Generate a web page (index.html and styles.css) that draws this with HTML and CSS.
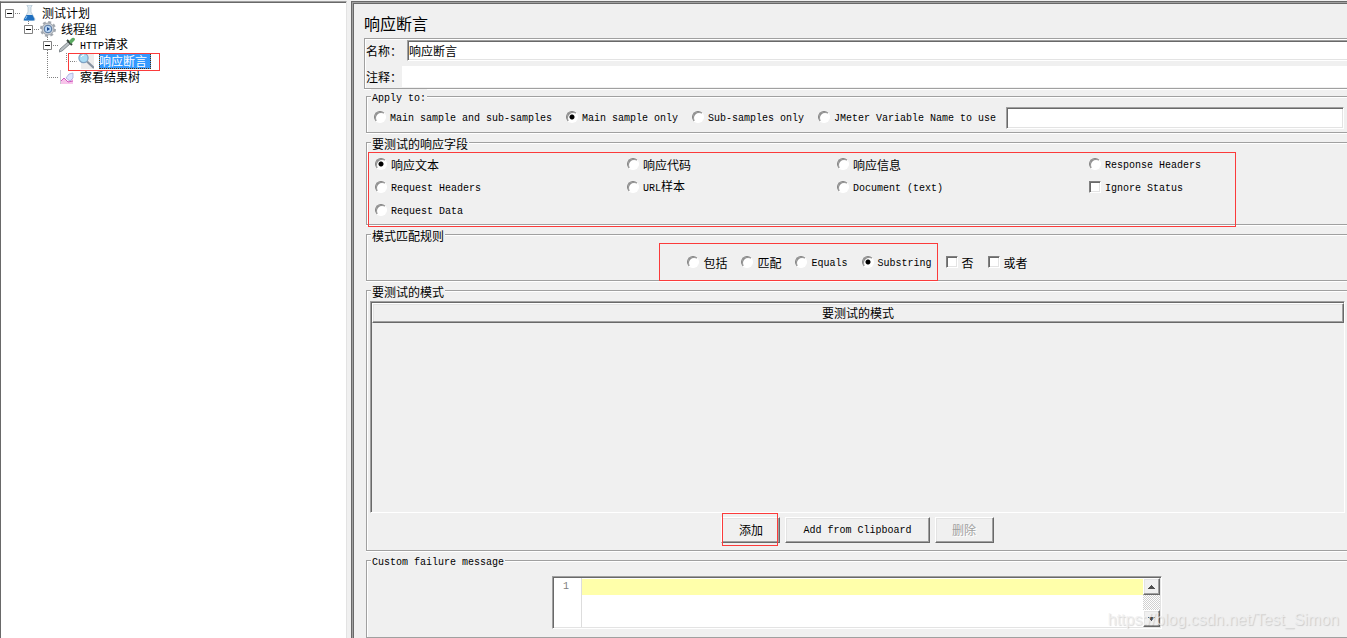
FILE: index.html
```html
<!DOCTYPE html>
<html lang="zh-CN">
<head>
<meta charset="utf-8">
<title>响应断言</title>
<link rel="stylesheet" href="styles.css">
</head>
<body>
<div class="window">
  <nav class="tree-pane">
    <ul class="tree">
      <li>
        <div class="node">
          <svg class="branch" viewBox="0 0 16 16"><path class="dots" d="M10 8.500h6"/><path class="box" d="M.5 4.500h8v8h-8z"/><path class="sign" d="M2 8.500h5"/></svg>
          <svg class="icon" viewBox="0 0 16 16"><path d="M6 0h5v1l-1 1v5l4 7q0 2-2 2H4q-2 0-1-2l4-7V2L6 1z" fill="#dbe8f1" stroke="#a5b9c8" stroke-width=".6"/><path d="M5.500 10h6l2 4q0 1.500-1.500 1.500H4q-1.500 0-1-1.500z" fill="#1e6fc0"/><path d="M6 11l-1.500 3" stroke="#8dc6f5"/></svg>
          <span>测试计划</span>
        </div>
        <ul>
          <li>
            <div class="node">
              <svg class="branch" viewBox="0 0 16 16"><path class="dots" d="M4.500 0v4M10 8.500h6"/><path class="box" d="M.5 4.500h8v8h-8z"/><path class="sign" d="M2 8.500h5"/></svg>
              <svg class="icon gear" viewBox="0 0 18 16"><circle cx="9" cy="8" r="7" fill="none" stroke="#a3a9b0" stroke-width="2" stroke-dasharray="3 2.500"/><circle cx="9" cy="8" r="6" fill="#c9ced4" stroke="#8f969e" stroke-width=".8"/><circle cx="9" cy="8" r="3.800" fill="#b9d6f4" stroke="#54759f"/><path d="M8 6l3 2-3 2z" fill="#1c4a94"/></svg>
              <span>线程组</span>
            </div>
            <ul>
              <li>
                <div class="node">
                  <svg class="branch" viewBox="0 0 16 16"><path class="dots" d="M4.500 0v4M4.500 13v3M10 8.500h6"/><path class="box" d="M.5 4.500h8v8h-8z"/><path class="sign" d="M2 8.500h5"/></svg>
                  <svg class="icon" viewBox="0 0 16 16"><path d="M0 15l1-3 8-7 2 2-8 7z" fill="#b9c0c4" stroke="#70777c" stroke-width=".8"/><path d="M8 3l5 5" stroke="#35433a" stroke-width="2"/><path d="M10 4l3-3q2-1 3 1 0 1-1 2l-3 3z" fill="#5cab62"/></svg>
                  <span><span class="latin">HTTP</span>请求</span>
                </div>
                <ul>
                  <li>
                    <div class="node">
                      <svg class="branch wide" viewBox="0 0 35 16"><path class="dots" d="M4.500 0v16M23.500 0v8.500h10"/></svg>
                      <svg class="icon" viewBox="0 0 16 16"><path d="M3 0h13v16H3z" fill="#ececec"/><path d="M9 8.500l7 6.500" stroke="#8792a0" stroke-width="2.200"/><circle cx="5.500" cy="5" r="4.600" fill="#a8dcf5" stroke="#7fa3c4" stroke-width="1.200"/><path d="M3 4q1-2 3-2" fill="none" stroke="#fff"/></svg>
                      <span class="selected">响应断言</span>
                      <i class="mark mark-node"></i>
                    </div>
                  </li>
                </ul>
              </li>
              <li>
                <div class="node">
                  <svg class="branch" viewBox="0 0 16 16"><path class="dots" d="M4.500 0v8.500H16"/></svg>
                  <svg class="icon" viewBox="0 0 16 16"><path d="M1.500 1v14" stroke="#c9c9d4"/><path d="M2 15v-3l3-3 3 3 6-2v5z" fill="#f7c4ea"/><path d="M2 12l3-3 4 4 5-1" fill="none" stroke="#cf59bd"/><path d="M7 9l3-4 4-1v5l-3 3z" fill="#dce4ff" stroke="#a7a9dc" stroke-width=".8"/></svg>
                  <span>察看结果树</span>
                </div>
              </li>
            </ul>
          </li>
        </ul>
      </li>
    </ul>
  </nav>

  <main class="panel">
    <h1>响应断言</h1>

    <div class="naming">
      <div class="name-row"><label for="name">名称：</label><input id="name" class="field sunken" type="text" value="响应断言"></div>
      <div class="name-row"><label for="comment">注释：</label><input id="comment" class="field" type="text"></div>
    </div>

    <fieldset class="apply">
      <legend class="latin">Apply to:</legend>
      <div class="apply-row">
        <label class="latin"><input type="radio" name="scope">Main sample and sub-samples</label>
        <label class="latin"><input type="radio" name="scope" checked>Main sample only</label>
        <label class="latin"><input type="radio" name="scope">Sub-samples only</label>
        <label class="latin"><input type="radio" name="scope">JMeter Variable Name to use</label>
        <input class="field sunken variable" type="text" aria-label="JMeter Variable Name to use">
      </div>
    </fieldset>

    <fieldset class="response">
      <legend>要测试的响应字段</legend>
      <div class="options">
        <label><input type="radio" name="target" checked>响应文本</label>
        <label><input type="radio" name="target">响应代码</label>
        <label><input type="radio" name="target">响应信息</label>
        <label class="latin"><input type="radio" name="target">Response Headers</label>
        <label class="latin"><input type="radio" name="target">Request Headers</label>
        <label><input type="radio" name="target"><span><span class="latin">URL</span>样本</span></label>
        <label class="latin"><input type="radio" name="target">Document (text)</label>
        <label class="latin"><input type="checkbox">Ignore Status</label>
        <label class="latin"><input type="radio" name="target">Request Data</label>
      </div>
      <i class="mark mark-response"></i>
    </fieldset>

    <fieldset class="rules">
      <legend>模式匹配规则</legend>
      <div class="rule-row">
        <label><input type="radio" name="rule">包括</label>
        <label><input type="radio" name="rule">匹配</label>
        <label class="latin"><input type="radio" name="rule">Equals</label>
        <label class="latin"><input type="radio" name="rule" checked>Substring</label>
        <label><input type="checkbox">否</label>
        <label><input type="checkbox">或者</label>
        <i class="mark mark-rules"></i>
      </div>
    </fieldset>

    <fieldset class="patterns">
      <legend>要测试的模式</legend>
      <div class="table-box">
        <table>
          <thead><tr><th>要测试的模式</th></tr></thead>
          <tbody></tbody>
        </table>
      </div>
      <div class="buttons">
        <span class="marked"><button type="button">添加</button><i class="mark mark-add"></i></span>
        <button type="button" class="latin clipboard">Add from Clipboard</button>
        <button type="button" disabled>删除</button>
      </div>
    </fieldset>

    <fieldset class="message">
      <legend class="latin">Custom failure message</legend>
      <div class="editor">
        <div class="gutter latin">1</div>
        <textarea aria-label="Custom failure message"></textarea>
        <div class="scrollbar">
          <button type="button" aria-label="向上滚动"><svg viewBox="0 0 7 4"><path d="M3 0h1v1h1v1h1v1h1v1H0V3h1V2h1V1h1z"/></svg></button>
          <button type="button" aria-label="向下滚动"><svg viewBox="0 0 7 4"><path d="M0 0h7v1H6v1H5v1H4v1H3V3H2V2H1V1H0z"/></svg></button>
        </div>
      </div>
    </fieldset>
    <div class="watermark">https://blog.csdn.net/Test_Simon</div>
  </main>
</div>
</body>
</html>
```
FILE: styles.css
```css
* { box-sizing: border-box; }

body {
  margin: 0;
  background: #f0f0f0;
  color: #000;
  font: 12px/16px "Noto Sans CJK SC", sans-serif;
  overflow: hidden;
}

input, button, textarea { font: inherit; color: inherit; margin: 0; }

.latin { font-family: "Liberation Mono", "Noto Sans CJK SC", monospace; font-size: 10px; }

.window { display: flex; gap: 4px; min-height: 100vh; padding-top: 1px; }

/* Test plan tree */
.tree-pane {
  flex: 0 0 347px;
  padding: 3px 0 0 4px;
  background: #fff;
  border-top: 1px solid #a0a0a0;
  border-left: 1px solid #696969;
  border-right: 1px solid #e3e3e3;
  box-shadow: inset 0 1px #696969;
}
.tree, .tree ul { list-style: none; margin: 0; padding: 0; }
.tree ul { padding-left: 19px; }
.node { display: flex; align-items: center; height: 16px; position: relative; white-space: nowrap; }
.branch { width: 16px; height: 16px; flex: none; }
.branch.wide { width: 35px; margin-left: -19px; }
.dots { fill: none; stroke: #808080; stroke-dasharray: 1 1; }
.box { fill: #fff; stroke: #808080; }
.sign { stroke: #000; }
.icon { width: 16px; height: 16px; flex: none; margin-right: 5px; }
.icon.gear { width: 18px; margin: 0 4px 0 -1px; }
.selected {
  height: 16px;
  padding-right: 4px;
  color: #fff;
  background: #3399ff;
  outline: 1px dotted #5c3000;
  outline-offset: -1px;
}

/* Highlight rectangles lying over the controls */
.mark { position: absolute; z-index: 1; border: 1px solid #fb3b3b; pointer-events: none; }
.mark-node { left: 63px; left: 6px; top: 0; width: 92px; height: 18px; }
.mark-response { left: 1px; top: 2px; width: 868px; height: 75px; }
.mark-rules { left: -28px; top: -12px; width: 279px; height: 38px; }
.mark-add { left: 1px; top: -5px; width: 56px; height: 33px; }

/* Settings panel */
.panel {
  flex: 1;
  min-width: 0;
  position: relative;
  padding: 12px 0 0 12px;
  border-top: 1px solid #696969;
  border-left: 1px solid #696969;
  box-shadow: inset 1px 1px #a0a0a0, inset 2px 2px #696969;
}
h1 { margin: 0 0 6px; font-size: 16px; line-height: 18px; font-weight: 400; }

.naming {
  display: grid;
  gap: 5px;
  padding: 1px 0 1px 1px;
  border: 1px solid #a0a0a0;
  border-right: 0;
  box-shadow: inset 1px 1px #fff, 0 1px #fff;
}
.name-row { display: flex; align-items: center; }
.name-row label { width: 36px; flex: none; }
.name-row .field { flex: 1; height: 21px; }
.name-row .sunken { margin-left: 5px; border-right: 0; box-shadow: inset 1px 1px #696969, inset 0 -1px #e3e3e3; }

.field { min-width: 0; padding: 0; border: 0; border-radius: 0; background: #fff; outline: 0; }
.sunken {
  padding: 0 1px;
  border: 1px solid;
  border-color: #a0a0a0 #fff #fff #a0a0a0;
  box-shadow: inset 1px 1px #696969, inset -1px -1px #e3e3e3;
}

fieldset {
  position: relative;
  min-width: 0;
  margin: 0 0 2px 2px;
  padding: 3px 3px 3px 4px;
  border: 1px solid #a0a0a0;
  border-right: 0;
  box-shadow: inset 1px 1px #fff, 0 1px #fff;
}
legend { padding: 2px 1px 0; line-height: 13px; background: #f0f0f0; }
legend.latin { padding-top: 4px; line-height: 11px; }

label { display: flex; align-items: center; gap: 4px; white-space: nowrap; }
label.latin { padding-top: 2px; }

input[type="radio"], input[type="checkbox"] {
  appearance: none;
  width: 12px;
  height: 12px;
  flex: none;
  margin-bottom: 2px;
  background: #fff;
  border: 1px solid;
  border-color: #808080 #fff #fff #808080;
}
label.latin input { margin-bottom: 4px; }
input[type="radio"] { border-radius: 50%; box-shadow: inset 1px 1px #909090; }
input[type="radio"]:checked { background: radial-gradient(circle at 5px 5px, #000 2px, #fff 3px); }
input[type="checkbox"] { box-shadow: inset 1px 1px #696969, inset -1px -1px #e3e3e3; }

.apply-row { display: flex; align-items: center; gap: 14px; padding-left: 3px; }
.variable { flex: 1; height: 22px; margin-left: -4px; }

.response { padding-bottom: 2px; }
.options {
  display: grid;
  grid-template-columns: 252px 210px 252px 1fr;
  grid-auto-rows: 23px;
  padding-left: 4px;
}

.rules { padding: 13px 3px 10px 4px; }
.rule-row { display: flex; gap: 14px; position: relative; width: max-content; height: 15px; margin: 0 auto; }

.table-box {
  height: 212px;
  border: 1px solid;
  border-color: #a0a0a0 #fff #fff #a0a0a0;
  box-shadow: inset 1px 1px #696969;
  padding: 1px 0 0 1px;
}
.patterns { padding-left: 3px; padding-right: 2px; padding-bottom: 6px; }
.patterns legend { margin-left: 1px; }
table { width: 100%; border-collapse: separate; border-spacing: 0; }
th {
  height: 20px;
  padding: 0;
  font-weight: 400;
  line-height: 16px;
  border: 1px solid;
  border-color: #fff #696969 #696969 #fff;
  box-shadow: inset -1px -1px #a0a0a0, inset 1px 1px #e3e3e3;
}

.buttons { display: flex; justify-content: center; gap: 5px; margin-top: 4px; }
.marked { position: relative; display: flex; }
button {
  min-width: 59px;
  height: 26px;
  padding: 0;
  background: #f0f0f0;
  border: 1px solid;
  border-color: #fff #696969 #696969 #fff;
  border-radius: 0;
  box-shadow: inset -1px -1px #a0a0a0, inset 1px 1px #e3e3e3;
}
.clipboard { padding: 2px 17px 0; }
.patterns { padding-bottom: 7px; }
.mark-add { top: -4px; }
button:disabled { color: #a0a0a0; text-shadow: 1px 1px #fff; }

.message { margin-bottom: 0; padding: 8px 0; }
.message legend { margin-left: 4px; }
.editor {
  display: flex;
  width: 610px;
  height: 53px;
  margin: 0 auto;
  padding: 1px;
  background: #fff;
  border: 1px solid;
  border-color: #a0a0a0 #fff #fff #a0a0a0;
  box-shadow: inset 1px 1px #696969, inset -1px -1px #e3e3e3;
}
.gutter { width: 28px; padding-left: 9px; line-height: 18px; color: #808080; border-right: 1px solid #ddd; }
textarea {
  flex: 1;
  min-width: 0;
  padding: 0;
  border: 0;
  outline: 0;
  resize: none;
  overflow: hidden;
  line-height: 16px;
  background: linear-gradient(#ffffaa, #ffffaa) 0 1px / 100% 16px no-repeat #fff;
}
.scrollbar {
  display: flex;
  flex-direction: column;
  justify-content: space-between;
  width: 17px;
  background: repeating-conic-gradient(#d0d0d0 0 25%, #fff 0 50%) 0 0 / 2px 2px;
}
.scrollbar button { display: grid; place-items: center; min-width: 0; width: 17px; height: 17px; }
.scrollbar svg { width: 7px; height: 4px; fill: #505050; }

.watermark {
  position: absolute;
  z-index: 1;
  right: 8px;
  bottom: 9px;
  font: 16px/18px "Liberation Sans", sans-serif;
  color: rgba(240, 240, 240, .8);
  text-shadow: 1px 1px 1px rgba(0, 0, 0, .15);
  pointer-events: none;
}
```
